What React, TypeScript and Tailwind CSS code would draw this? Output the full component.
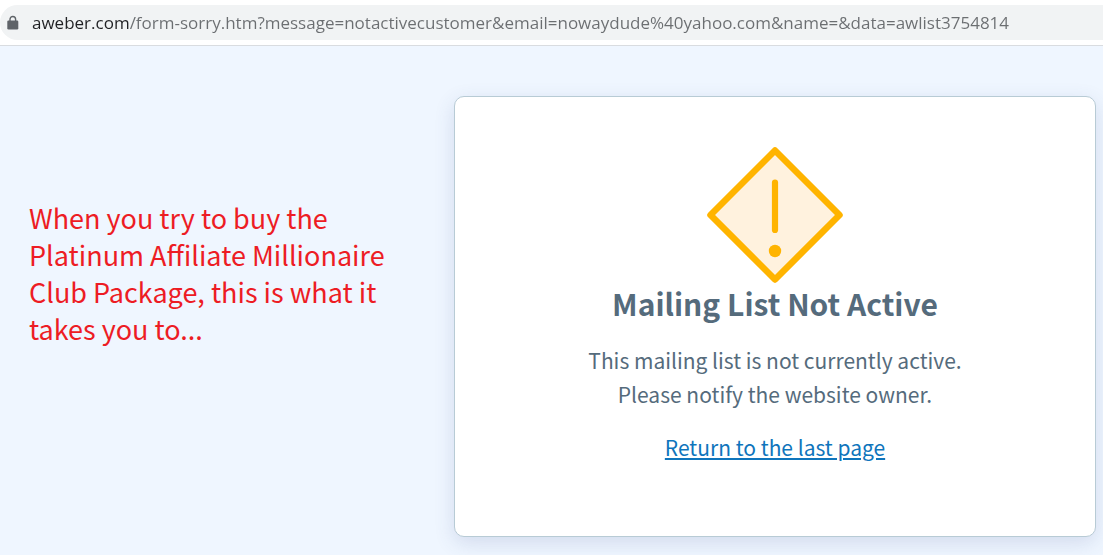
const PAGE_URL = 'aweber.com/form-sorry.htm?message=notactivecustomer&email=nowaydude%40yahoo.com&name=&data=awlist3754814'

const LockIcon = () => (
    <svg viewBox="0 0 12 16" className="w-3 h-4 shrink-0" aria-hidden="true">
        <path d="M3 7V4.3a2.8 2.8 0 0 1 5.6 0V7" fill="none" stroke="#5f6368" strokeWidth="1.4" />
        <rect x="0.3" y="5.5" width="11" height="9" rx="1.2" fill="#5f6368" />
    </svg>
)

const WarningIcon = () => (
    <svg viewBox="0 0 136 136" className="w-[136px] h-[136px]" role="img" aria-label="Warning">
        <path
            d="M68 3.5 132.5 68 68 132.5 3.5 68Z"
            fill="#fff2de"
            stroke="#ffb400"
            strokeWidth="6.5"
            strokeLinejoin="round"
        />
        <path d="M68 35.5V83" stroke="#ffb400" strokeWidth="6.2" strokeLinecap="round" />
        <circle cx="68" cy="104" r="6.2" fill="#ffb400" />
    </svg>
)

export default function App() {
    return (
        <div className="min-h-screen flex flex-col bg-[#eff6ff]">
            {/* Address bar, the domain is darker than the path */}
            <header className="bg-white border-b border-[#d9dce0] py-[5px]">
                <label className="flex items-center gap-[13px] h-[35px] pl-[7px] rounded-l-full bg-[#f1f3f4]">
                    <LockIcon />
                    <input
                        type="text"
                        aria-label="Address"
                        defaultValue={PAGE_URL}
                        spellCheck={false}
                        className="flex-1 min-w-0 outline-none font-['Open_Sans','Noto_Sans',sans-serif] text-[17px] text-transparent bg-clip-text bg-[linear-gradient(to_right,#202124_97px,#6b6e71_97px)]"
                    />
                </label>
            </header>

            <main className="flex-1 flex items-start pt-[50px] pr-[7px] pb-[18px] font-['Noto_Sans_CJK_SC',sans-serif]">
                <aside className="w-[454px] shrink-0 pl-[29px] pt-[103px] text-[27px] leading-[37px] text-[#ed1c24]">
                    <p>
                        When you try to buy the<br />
                        Platinum Affiliate Millionaire<br />
                        Club Package, this is what it<br />
                        takes you to...
                    </p>
                </aside>

                <section className="flex-1 flex flex-col items-center pt-[50px] pb-[72px] bg-white border border-[#b8cbd5] rounded-[10px] shadow-[0_6px_20px_rgba(60,80,140,0.16)] text-center text-[#556b7c]">
                    <WarningIcon />
                    <h1 className="text-[30px] leading-[40px] font-bold">Mailing List Not Active</h1>
                    <p className="mt-5 text-[21px] leading-[34px]">
                        This mailing list is not currently active.<br />
                        Please notify the website owner.
                    </p>
                    <a
                        href="#"
                        className="mt-[19px] text-[21px] leading-[34px] text-[#0f75bc] underline decoration-2 underline-offset-2"
                    >
                        Return to the last page
                    </a>
                </section>
            </main>
        </div>
    )
}
